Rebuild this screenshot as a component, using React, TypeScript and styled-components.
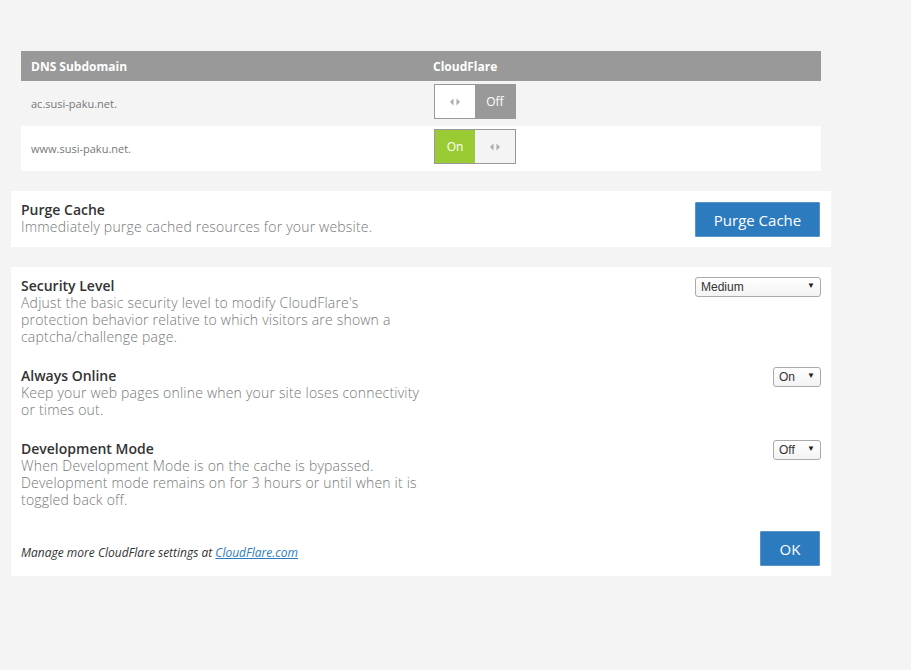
import React from 'react'
import styled, { createGlobalStyle } from 'styled-components'

const GlobalStyle = createGlobalStyle`
  body {
    margin: 0;
    background: #f4f4f4;
    font-family: 'Open Sans', 'Liberation Sans', sans-serif;
  }
`

const Page = styled.div`
  width: 820px;
  padding: 51px 0 40px 11px;
  display: flex;
  flex-direction: column;
  gap: 20px;
`

const Table = styled.div`
  margin: 0 10px;
  display: flex;
  flex-direction: column;
`

const HeadRow = styled.div`
  display: grid;
  grid-template-columns: 402px 1fr;
  height: 30px;
  align-items: center;
  background: #999;
  color: #fff;
  font-size: 12px;
  font-weight: 700;
`

const HeadCell = styled.div`
  padding: 0 10px;
`

const Row = styled.div<{ $alt?: boolean }>`
  display: grid;
  grid-template-columns: 402px 1fr;
  align-items: center;
  height: 45px;
  background: ${(p) => (p.$alt ? '#fff' : 'transparent')};
`

const DomainCell = styled.div`
  padding: 0 10px 1px;
  font-size: 11px;
  color: #777;
`

const ToggleCell = styled.div`
  padding: 0 0 4px 11px;
`

const Toggle = styled.div`
  display: flex;
  width: 82px;
  height: 35px;
  box-sizing: border-box;
  border: 1px solid #999;
`

const Half = styled.div<{ $tone: 'on' | 'off' | 'white' | 'light' }>`
  flex: 1;
  display: flex;
  align-items: center;
  justify-content: center;
  font-size: 12px;
  color: #fff;
  background: ${(p) =>
    p.$tone === 'on' ? '#9acb34' : p.$tone === 'off' ? '#999' : p.$tone === 'white' ? '#fff' : '#f4f4f4'};
  border-radius: ${(p) => (p.$tone === 'white' ? '0 2px 2px 0' : '0')};
`

function Arrows() {
  return (
    <svg width="10" height="8" viewBox="0 0 10 8">
      <path d="M0 4 L3.5 0.5 L3.5 7.5 Z" fill="#aaa" />
      <path d="M10 4 L6.5 0.5 L6.5 7.5 Z" fill="#aaa" />
    </svg>
  )
}

const Panel = styled.div`
  background: #fff;
  padding: 10px;
  display: flex;
  flex-direction: column;
`

const Setting = styled.div<{ $gap?: number }>`
  display: flex;
  justify-content: space-between;
  align-items: flex-start;
  margin-bottom: ${(p) => p.$gap ?? 0}px;
`

const TextBlock = styled.div`
  width: 402px;
`

const Title = styled.div`
  font-size: 14px;
  font-weight: 600;
  line-height: 17px;
  color: #333;
`

const Desc = styled.div`
  font-size: 14px;
  font-weight: 300;
  line-height: 17px;
  letter-spacing: 0.2px;
  color: #777;
`

const Button = styled.button<{ $width: number }>`
  width: ${(p) => p.$width}px;
  height: 35px;
  margin: 1px 1px 0 0;
  background: #2d7bbf;
  border: 1px solid #5b93c6;
  border-radius: 1px;
  color: #fff;
  font-family: 'Open Sans', 'Liberation Sans', sans-serif;
  font-size: 15px;
  padding: 0;
`

const SelectWrap = styled.div<{ $width: number }>`
  position: relative;
  width: ${(p) => p.$width}px;
  height: 20px;
  box-sizing: border-box;
  border: 1px solid #aaa;
  border-radius: 3px;
  background: linear-gradient(#fff, #f3f3f3);
  font-family: 'Liberation Sans', Arial, sans-serif;
  font-size: 12px;
  color: #333;
  display: flex;
  align-items: center;
  padding-left: 5px;

  &::after {
    content: '▼';
    position: absolute;
    right: 5px;
    top: 3px;
    font-size: 8px;
    color: #222;
  }
`

const Footer = styled.div`
  display: flex;
  justify-content: space-between;
  align-items: center;
`

const Note = styled.div`
  font-size: 12px;
  font-style: italic;
  color: #333;
  padding-top: 8px;

  a {
    color: #2d7bbf;
    text-decoration: underline;
  }
`

export default function App() {
  return (
    <>
      <GlobalStyle />
      <Page>
        <Table>
          <HeadRow>
            <HeadCell>DNS Subdomain</HeadCell>
            <HeadCell>CloudFlare</HeadCell>
          </HeadRow>
          <Row>
            <DomainCell>ac.susi-paku.net.</DomainCell>
            <ToggleCell>
              <Toggle>
                <Half $tone="white">
                  <Arrows />
                </Half>
                <Half $tone="off">Off</Half>
              </Toggle>
            </ToggleCell>
          </Row>
          <Row $alt>
            <DomainCell>www.susi-paku.net.</DomainCell>
            <ToggleCell>
              <Toggle>
                <Half $tone="on">On</Half>
                <Half $tone="light">
                  <Arrows />
                </Half>
              </Toggle>
            </ToggleCell>
          </Row>
        </Table>

        <Panel>
          <Setting>
            <TextBlock>
              <Title>Purge Cache</Title>
              <Desc>Immediately purge cached resources for your website.</Desc>
            </TextBlock>
            <Button $width={125}>Purge Cache</Button>
          </Setting>
        </Panel>

        <Panel>
          <Setting $gap={22}>
            <TextBlock>
              <Title>Security Level</Title>
              <Desc>
                Adjust the basic security level to modify CloudFlare's protection behavior relative to which
                visitors are shown a captcha/challenge page.
              </Desc>
            </TextBlock>
            <SelectWrap $width={126}>Medium</SelectWrap>
          </Setting>
          <Setting $gap={22}>
            <TextBlock>
              <Title>Always Online</Title>
              <Desc>Keep your web pages online when your site loses connectivity or times out.</Desc>
            </TextBlock>
            <SelectWrap $width={48}>On</SelectWrap>
          </Setting>
          <Setting $gap={22}>
            <TextBlock>
              <Title>Development Mode</Title>
              <Desc>
                When Development Mode is on the cache is bypassed. Development mode remains on for 3 hours or
                until when it is toggled back off.
              </Desc>
            </TextBlock>
            <SelectWrap $width={48}>Off</SelectWrap>
          </Setting>
          <Footer>
            <Note>
              Manage more CloudFlare settings at <a href="#">CloudFlare.com</a>
            </Note>
            <Button $width={60}>OK</Button>
          </Footer>
        </Panel>
      </Page>
    </>
  )
}
